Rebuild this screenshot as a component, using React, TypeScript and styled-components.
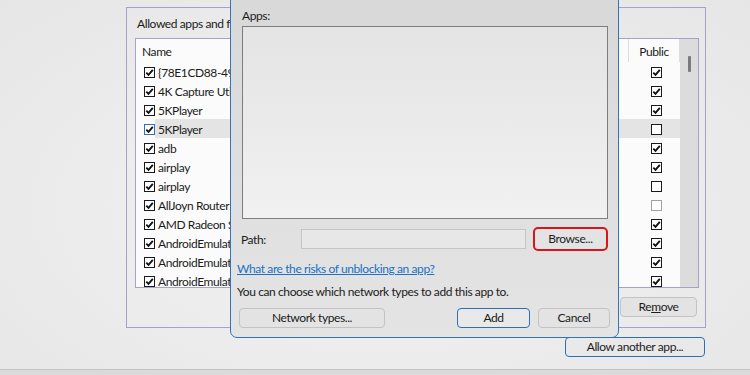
import React from "react";
import styled, { createGlobalStyle } from "styled-components";

const GlobalStyle = createGlobalStyle`
  html, body {
    margin: 0;
    padding: 0;
  }
  body {
    font-family: Lato, "Noto Sans", Arial, sans-serif;
    font-size: 12px;
    letter-spacing: -0.4px;
    color: #1b1b1b;
  }
`;

type App = { name: string; own: "on" | "hover"; pub: "on" | "off" | "disabled" };

const Apps: App[] = [
  { name: "{78E1CD88-49E3-476E-B926-580E596AD309}", own: "on", pub: "on" },
  { name: "4K Capture Utility", own: "on", pub: "on" },
  { name: "5KPlayer", own: "on", pub: "on" },
  { name: "5KPlayer", own: "hover", pub: "off" },
  { name: "adb", own: "on", pub: "on" },
  { name: "airplay", own: "on", pub: "on" },
  { name: "airplay", own: "on", pub: "off" },
  { name: "AllJoyn Router", own: "on", pub: "disabled" },
  { name: "AMD Radeon Settings", own: "on", pub: "on" },
  { name: "AndroidEmulator", own: "on", pub: "on" },
  { name: "AndroidEmulatorCustom", own: "on", pub: "on" },
  { name: "AndroidEmulatorLauncher", own: "on", pub: "on" },
];

const CheckBox = ({ state }: { state: "on" | "off" | "hover" | "disabled" }) => {
  const edge =
    state === "hover" ? "#3470b5" : state === "disabled" ? "#a2a2a2" : "#1a1a1a";
  const ticked = state === "on" || state === "hover";
  return (
    <Box $edge={edge}>
      {ticked && (
        <svg width="9" height="9" viewBox="0 0 9 9">
          <path
            d="M1.3 4.6 L3.5 6.8 L7.8 1.8"
            fill="none"
            stroke="#111"
            strokeWidth="1.9"
          />
        </svg>
      )}
    </Box>
  );
};

export default function AllowApps() {
  return (
    <>
      <GlobalStyle />
      <Screen>
        <Main>
          <GroupBox>
            <Legend>Allowed apps and features:</Legend>
            <ListBox>
              <Table>
                <HeaderRow>
                  <HeadCell>Name</HeadCell>
                  <HeadCell $center>Public</HeadCell>
                </HeaderRow>
                {Apps.map((app, i) => (
                  <Row key={i} $selected={app.own === "hover"}>
                    <NameCell>
                      <CheckBox state={app.own} />
                      <span>{app.name}</span>
                    </NameCell>
                    <PublicCell>
                      <CheckBox state={app.pub} />
                    </PublicCell>
                  </Row>
                ))}
              </Table>
              <ScrollTrack>
                <Thumb />
              </ScrollTrack>
            </ListBox>
            <GroupActions>
              <Button $w={77}>
                Re<u>m</u>ove
              </Button>
            </GroupActions>
          </GroupBox>
          <PageActions>
            <Button $w={140} $focus>
              Allow another app...
            </Button>
          </PageActions>
        </Main>
        <BottomBar />

        <Dialog>
          <FieldLabel>Apps:</FieldLabel>
          <AppsBox />
          <PathRow>
            <PathLabel>Path:</PathLabel>
            <PathInput />
            <Button $w={75} $h={24} $marked>
              Browse...
            </Button>
          </PathRow>
          <Link>What are the risks of unblocking an app?</Link>
          <Note>You can choose which network types to add this app to.</Note>
          <DialogButtons>
            <Button $w={146}>Network types...</Button>
            <Spacer />
            <Button $w={73} $focus>
              Add
            </Button>
            <Button $w={72}>Cancel</Button>
          </DialogButtons>
        </Dialog>
      </Screen>
    </>
  );
}

const Screen = styled.div`
  position: relative;
  width: 750px;
  height: 375px;
  overflow: hidden;
  display: flex;
  flex-direction: column;
  background: radial-gradient(ellipse at 50% 55%, #f3f3f3 0%, #e6e6e6 100%);
`;

const Main = styled.div`
  flex: 1;
  display: flex;
  flex-direction: column;
  padding: 7px 0 0 126px;
`;

const GroupBox = styled.section`
  box-sizing: border-box;
  width: 580px;
  height: 321px;
  border: 1px solid #a3a3c9;
  padding: 0 6px 0 8px;
  display: flex;
  flex-direction: column;
`;

const Legend = styled.div`
  height: 16px;
  line-height: 16px;
  margin: 8px 0 0 2px;
  white-space: nowrap;
`;

const ListBox = styled.div`
  box-sizing: border-box;
  height: 250px;
  margin-top: 6px;
  border: 1px solid #a3a3c9;
  background: #fbfbfb;
  display: flex;
  overflow: hidden;
`;

const Table = styled.div`
  flex: 1;
  display: flex;
  flex-direction: column;
`;

const HeaderRow = styled.div`
  display: grid;
  grid-template-columns: 1fr 51px;
  height: 23px;
  flex-shrink: 0;
`;

const HeadCell = styled.div<{ $center?: boolean }>`
  display: flex;
  align-items: center;
  justify-content: ${(p) => (p.$center ? "center" : "flex-start")};
  padding-left: ${(p) => (p.$center ? "0" : "6px")};
  padding-top: 2px;
  border-right: 1px solid #dcdcdc;
`;

const Row = styled.div<{ $selected?: boolean }>`
  display: grid;
  grid-template-columns: 1fr 51px;
  height: 19px;
  flex-shrink: 0;
  background: ${(p) =>
    p.$selected
      ? "linear-gradient(to right, transparent 19px, #e4e4e4 19px)"
      : "transparent"};
`;

const NameCell = styled.div`
  display: flex;
  align-items: center;
  gap: 3px;
  padding: 1px 0 0 8px;
  white-space: nowrap;
  overflow: hidden;
`;

const PublicCell = styled.div`
  display: flex;
  align-items: center;
  justify-content: center;
  padding: 1px 0 0 3px;
`;

const Box = styled.span<{ $edge: string }>`
  box-sizing: border-box;
  flex-shrink: 0;
  width: 11px;
  height: 11px;
  border: 1.5px solid ${(p) => p.$edge};
  background: #fff;
  display: inline-flex;
  align-items: center;
  justify-content: center;
`;

const ScrollTrack = styled.div`
  width: 18px;
  flex-shrink: 0;
  background: #dcdcdc;
  display: flex;
  justify-content: center;
`;

const Thumb = styled.div`
  width: 3px;
  height: 16px;
  margin-top: 17px;
  background: #7b7b7b;
  border-radius: 1px;
`;

const GroupActions = styled.div`
  display: flex;
  justify-content: flex-end;
  margin: 9px 2px 0 0;
`;

const PageActions = styled.div`
  width: 580px;
  display: flex;
  justify-content: flex-end;
  margin-top: 9px;
  padding-right: 1px;
  box-sizing: border-box;
`;

const Button = styled.button<{
  $w: number;
  $h?: number;
  $focus?: boolean;
  $marked?: boolean;
}>`
  box-sizing: border-box;
  width: ${(p) => p.$w}px;
  height: ${(p) => p.$h ?? 20}px;
  padding: 0;
  font: inherit;
  letter-spacing: inherit;
  color: #1b1b1b;
  line-height: 1;
  background: ${(p) => (p.$focus ? "#e9e9e9" : "#e3e3e3")};
  border: ${(p) =>
    p.$marked
      ? "2px solid #d8141c"
      : p.$focus
      ? "1px solid #2d6fb4"
      : "1px solid #c3c3c3"};
  border-radius: ${(p) => (p.$marked ? "5px" : "4px")};
  flex-shrink: 0;
`;

const BottomBar = styled.div`
  height: 5px;
  border-top: 1px solid #c3c3c3;
  background: #dadada;
`;

const Dialog = styled.div`
  position: absolute;
  left: 230px;
  top: -20px;
  width: 389px;
  height: 358px;
  box-sizing: border-box;
  border: 1px solid #3174b9;
  border-radius: 0 0 7px 7px;
  background: linear-gradient(#d8d8d8, #e4e4e4);
  padding: 27px 0 0 6px;
  display: flex;
  flex-direction: column;
`;

const FieldLabel = styled.div`
  height: 16px;
  line-height: 16px;
  margin-left: 5px;
`;

const AppsBox = styled.div`
  box-sizing: border-box;
  width: 366px;
  height: 193px;
  margin: 2px 0 0 5px;
  border: 1px solid #7d7d7d;
  background: linear-gradient(#e4e4e4, #f1f1f1);
`;

const PathRow = styled.div`
  display: flex;
  align-items: center;
  height: 24px;
  margin: 8px 0 0 4px;
`;

const PathLabel = styled.div`
  width: 60px;
`;

const PathInput = styled.div`
  box-sizing: border-box;
  width: 225px;
  height: 20px;
  margin-right: 7px;
  border: 1px solid #c5c5c5;
  background: #e7e7e7;
`;

const Link = styled.a`
  height: 16px;
  line-height: 16px;
  margin-top: 10px;
  color: #2070c4;
  text-decoration: underline;
  white-space: nowrap;
`;

const Note = styled.div`
  height: 16px;
  line-height: 16px;
  margin-top: 7px;
  white-space: nowrap;
`;

const DialogButtons = styled.div`
  display: flex;
  gap: 8px;
  margin: 8px 8px 0 2px;
`;

const Spacer = styled.div`
  flex: 1;
`;
